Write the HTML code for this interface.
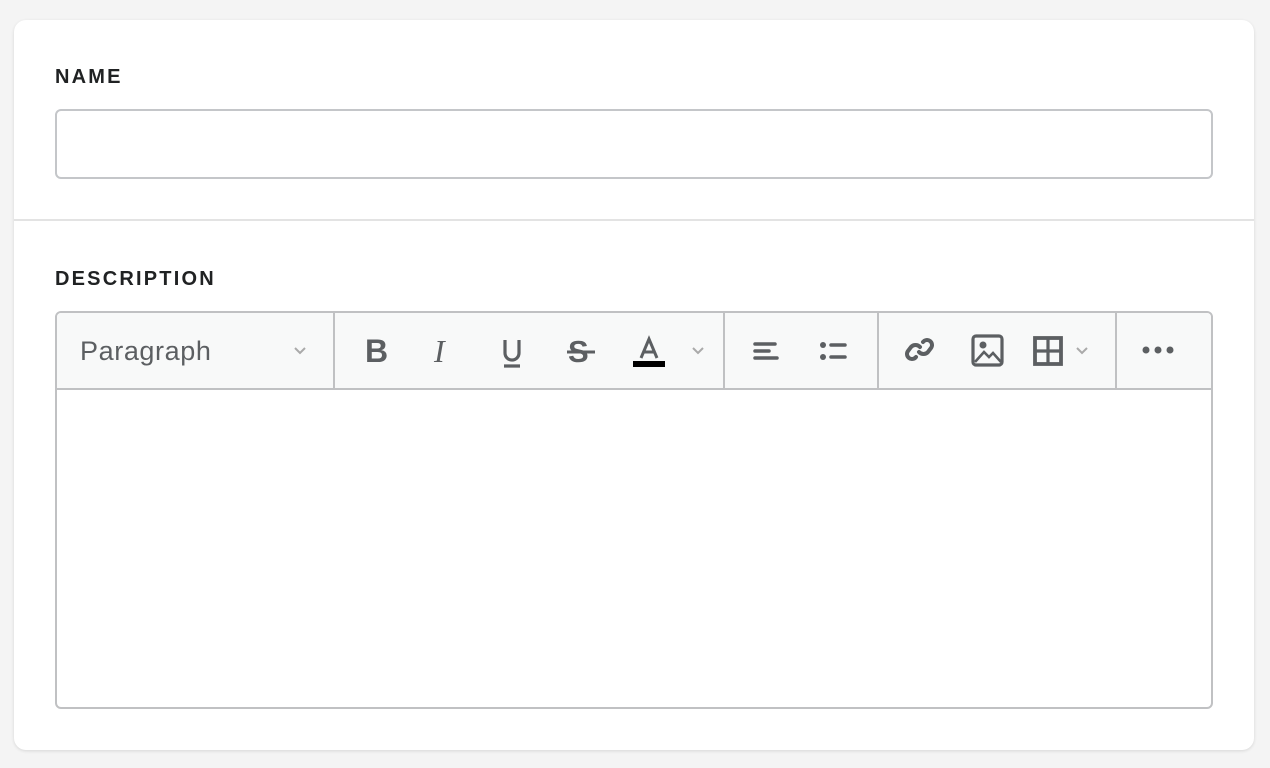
<!DOCTYPE html>
<html><head><meta charset="utf-8"><style>
*{box-sizing:border-box;margin:0;padding:0}
body{width:1270px;height:768px;background:#f4f4f4;font-family:"Liberation Sans",sans-serif;position:relative;overflow:hidden}
.card{position:absolute;left:14px;top:20px;width:1240px;height:730px;background:#fff;border-radius:12px;box-shadow:0 1px 3px rgba(0,0,0,.12)}
.lbl{position:absolute;left:41px;font-size:20px;font-weight:bold;letter-spacing:2.2px;color:#202223}
.inp{position:absolute;left:41px;top:89px;width:1158px;height:70px;border:2px solid #c4c6c9;border-radius:6px}
.div{position:absolute;left:0;top:199px;width:1240px;height:2px;background:#e3e3e3}
.ed{position:absolute;left:41px;top:291px;width:1158px;height:398px;border:2px solid #c0c1c3;border-radius:6px;overflow:hidden}
.tb{position:absolute;left:0;top:0;width:100%;height:77px;background:#f8f9f9;border-bottom:2px solid #c0c1c3}
.sep{position:absolute;top:0;width:2px;height:77px;background:#c0c1c3}
.ic{position:absolute}
.t{position:absolute;color:#5c5f62}
</style></head><body>
<div class="card">
<div class="lbl" style="top:46px">NAME</div>
<div class="inp"></div>
<div class="div"></div>
<div class="lbl" style="top:248px">DESCRIPTION</div>
<div class="ed"><div class="tb">
<div style="position:absolute;left:23px;top:23px;font-size:27px;letter-spacing:0.6px;color:#5c5f62">Paragraph</div>
<svg class="ic" style="left:236px;top:33px" width="14" height="10"><path d="M2 2l5 5 5-5" fill="none" stroke="#aaa" stroke-width="2"/></svg>
<div class="sep" style="left:276px"></div>
<div class="t" style="left:308px;top:20px;font-size:32px;font-weight:bold">B</div>
<div class="t" style="left:377px;top:20px;font-size:32px;font-style:italic;font-family:'Liberation Serif',serif">I</div>
<svg class="ic" style="left:442px;top:22px" width="26" height="34"><path d="M6 5v13a7 7 0 0 0 14 0V5M5 31h16" fill="none" stroke="#5c5f62" stroke-width="3.2"/></svg>
<div class="t" style="left:511px;top:21px;font-size:31px;font-weight:bold">S</div>
<svg class="ic" style="left:507px;top:22px" width="34" height="34"><path d="M3 17h28" stroke="#5c5f62" stroke-width="3"/></svg>
<svg class="ic" style="left:575px;top:22px" width="34" height="34"><path d="M9 23L17 4l8 19M12 17h10" fill="none" stroke="#5c5f62" stroke-width="3"/><rect x="1" y="26" width="32" height="6" fill="#000"/></svg>
<svg class="ic" style="left:634px;top:33px" width="14" height="10"><path d="M2 2l5 5 5-5" fill="none" stroke="#aaa" stroke-width="2"/></svg>
<div class="sep" style="left:666px"></div>
<svg class="ic" style="left:696px;top:28px" width="26" height="22"><path d="M2 3h20M2 10h14M2 17h22" stroke="#5c5f62" stroke-width="3.5" stroke-linecap="round"/></svg>
<svg class="ic" style="left:762px;top:28px" width="30" height="22"><circle cx="4" cy="4" r="3" fill="#5c5f62"/><circle cx="4" cy="16" r="3" fill="#5c5f62"/><path d="M12 4h14M12 16h14" stroke="#5c5f62" stroke-width="3.5" stroke-linecap="round"/></svg>
<div class="sep" style="left:820px"></div>
<svg class="ic" style="left:846px;top:22px" width="34" height="30"><path d="M17 12a6 6 0 0 0-9 0l-3 4a5 5 0 0 0 8 6M16 17a6 6 0 0 0 9 0l3-4a5 5 0 0 0-8-6" fill="none" stroke="#5c5f62" stroke-width="4" stroke-linecap="round"/></svg>
<svg class="ic" style="left:914px;top:21px" width="34" height="34"><rect x="2" y="2" width="29" height="29" rx="3" fill="none" stroke="#5c5f62" stroke-width="3.2"/><circle cx="12" cy="11" r="3.5" fill="#5c5f62"/><path d="M4 28l9-10 5 5 4-4 8 9" fill="none" stroke="#5c5f62" stroke-width="2.6"/></svg>
<svg class="ic" style="left:976px;top:23px" width="30" height="30"><rect x="2" y="2" width="26" height="26" fill="none" stroke="#5c5f62" stroke-width="3.8"/><path d="M15 2v26M2 15h26" stroke="#5c5f62" stroke-width="3.2"/></svg>
<svg class="ic" style="left:1018px;top:33px" width="14" height="10"><path d="M2 2l5 5 5-5" fill="none" stroke="#aaa" stroke-width="2"/></svg>
<div class="sep" style="left:1058px"></div>
<svg class="ic" style="left:1084px;top:31px" width="36" height="12"><circle cx="5" cy="6" r="3.5" fill="#5c5f62"/><circle cx="17" cy="6" r="3.5" fill="#5c5f62"/><circle cx="29" cy="6" r="3.5" fill="#5c5f62"/></svg>
</div></div>
</div>
</body></html>
